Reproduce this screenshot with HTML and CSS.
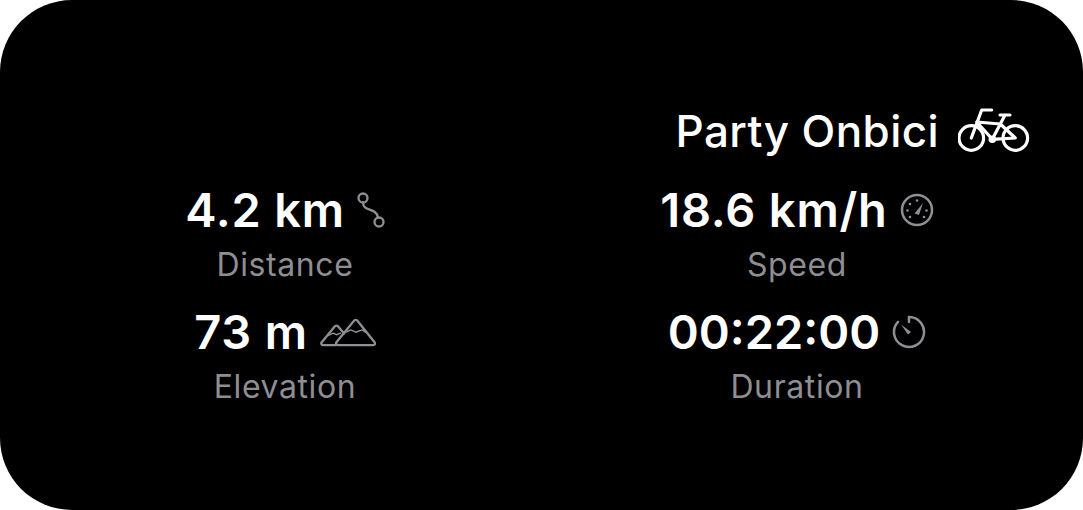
FILE: index.html
```html
<!DOCTYPE html>
<html lang="en">
<head>
<meta charset="utf-8">
<title>Party Onbici</title>
<link rel="stylesheet" href="styles.css">
</head>
<body>
<main class="card">
  <header class="title-row">
    <h1 class="title">Party Onbici</h1>
    <svg class="icon-bike" viewBox="0 0 72 46" fill="none" stroke="#fff" stroke-width="3.200" stroke-linecap="round" stroke-linejoin="round">
      <circle cx="13.300" cy="30" r="12.300"/>
      <circle cx="57.300" cy="30" r="12.300"/>
      <path d="M13.300 30 23.700 2H33.700M18.700 14 42.300 16 34.300 31.300ZM42 7H52M47 7 42.300 16M42.300 16 57.300 30 34.300 31.300"/>
      <circle cx="34.300" cy="31.300" r="2.200"/>
    </svg>
  </header>
  <section class="stats">
    <div class="stat">
      <div class="value-row">
        <span class="value">4.2 km</span>
        <svg class="icon icon-route" viewBox="0 0 28 36" fill="none" stroke="#8e8e93" stroke-width="2.300" stroke-linecap="round">
          <circle cx="6" cy="6" r="4.500"/>
          <circle cx="22" cy="30" r="4.500"/>
          <path d="M6 10.500C6 20 19 15 21 25.500"/>
        </svg>
      </div>
      <div class="label">Distance</div>
    </div>
    <div class="stat">
      <div class="value-row">
        <span class="value">18.6 km/h</span>
        <svg class="icon icon-gauge" viewBox="0 0 34 34" fill="none" stroke="#8e8e93" stroke-width="2.500">
          <circle cx="17" cy="17" r="15"/>
          <path d="M14.500 20.500 23 10 19 22Z" fill="#8e8e93" stroke="none"/>
          <g fill="#8e8e93" stroke="none">
            <circle cx="17" cy="7.500" r="1.300"/>
            <circle cx="10" cy="11" r="1.300"/>
            <circle cx="7.500" cy="17.500" r="1.300"/>
            <circle cx="10" cy="24" r="1.300"/>
            <circle cx="24" cy="24" r="1.300"/>
            <circle cx="26.500" cy="17.500" r="1.300"/>
          </g>
        </svg>
      </div>
      <div class="label">Speed</div>
    </div>
    <div class="stat">
      <div class="value-row">
        <span class="value">73 m</span>
        <svg class="icon icon-mountain" viewBox="0 0 58 30" fill="none" stroke="#8e8e93" stroke-width="2.400" stroke-linejoin="round" stroke-linecap="round">
          <path d="M17 28H3.500C1.500 28 .8 26.500 1.800 25L15 9C16 7.500 18 7.500 19 9L25 16"/>
          <path d="M19 28H55C57 28 57.800 26.500 56.500 25L39 3C38 1.500 36 1.500 35 3L17 25C16 26.500 17 28 19 28Z"/>
          <path class="snow" d="M27 14.700 32 12.300 37 14.700 43.700 12.300 47 14.700M8.700 18 13.700 15.700 17 17.300 21.300 15.700"/>
        </svg>
      </div>
      <div class="label">Elevation</div>
    </div>
    <div class="stat">
      <div class="value-row">
        <span class="value value-tight">00:22:00</span>
        <svg class="icon icon-timer" viewBox="0 0 34 34" fill="none" stroke="#8e8e93" stroke-width="2.500" stroke-linecap="round">
          <path d="M17 2A15 15 0 1 1 6 6.800"/>
          <path d="M17 2V7"/>
          <path d="M9 9.500 19 17 16 19.500Z" fill="#8e8e93" stroke="none"/>
        </svg>
      </div>
      <div class="label">Duration</div>
    </div>
  </section>
</main>
</body>
</html>
```

FILE: styles.css
```css
* {
  box-sizing: border-box;
}

html,
body {
  margin: 0;
  height: 100%;
  background: #fff;
}

body {
  overflow: hidden;
}

.card {
  width: 1083px;
  height: 510px;
  background: #000;
  border-radius: 72px;
  padding: 104px 29px 0 30px;
  font-family: Inter, "Liberation Sans", sans-serif;
  color: #fff;
}

.title-row {
  display: flex;
  justify-content: flex-end;
  align-items: center;
  gap: 19px;
  height: 54px;
  padding-right: 24px;
}

.title {
  margin: 0;
  font-size: 44px;
  font-weight: 550;
  line-height: 54px;
  letter-spacing: 0.4px;
}

.icon-bike {
  width: 72px;
  height: 46px;
}

.stats {
  display: grid;
  grid-template-columns: 510px 514px;
  grid-auto-rows: 122px;
  margin-top: 24px;
}

.stat {
  display: flex;
  flex-direction: column;
  align-items: center;
}

.value-row {
  display: flex;
  align-items: center;
  gap: 12px;
  height: 56px;
}

.value {
  font-size: 47px;
  font-weight: 600;
  line-height: 56px;
  letter-spacing: 0.8px;
  white-space: nowrap;
}

.value-tight {
  letter-spacing: 0;
}

.label {
  font-size: 32px;
  line-height: 54px;
  letter-spacing: 0.6px;
  color: #8e8e93;
}

.icon-route {
  width: 28px;
  height: 36px;
}

.icon-gauge,
.icon-timer {
  width: 34px;
  height: 34px;
}

.icon-mountain {
  width: 56px;
  height: 29px;
}

.snow {
  stroke-width: 1.500;
}
```
